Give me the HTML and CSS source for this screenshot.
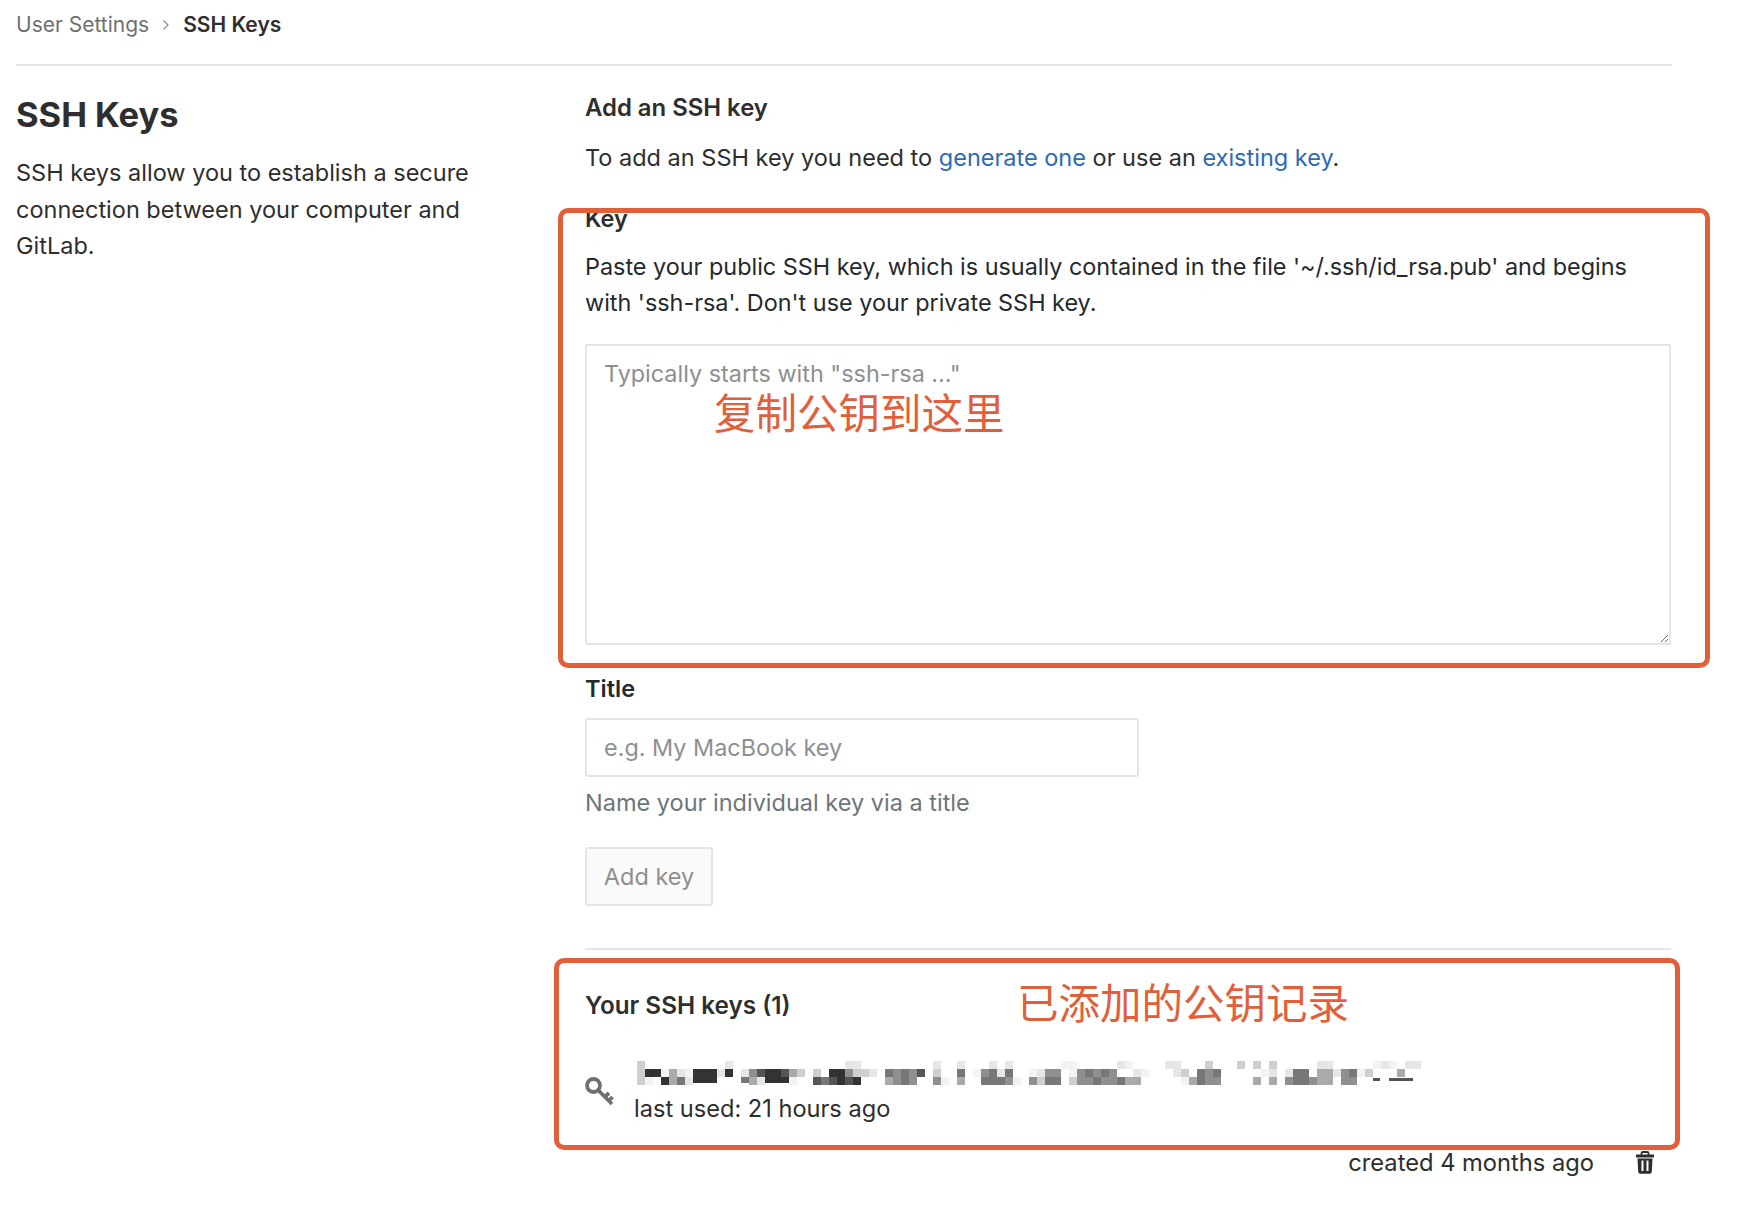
FILE: index.html
```html
<!DOCTYPE html>
<html lang="en">
<head>
<meta charset="utf-8">
<title>SSH Keys</title>
<link rel="stylesheet" href="styles.css">
</head>
<body>
<div class="page">
  <nav class="crumbs">
    <span class="crumb">User Settings</span>
    <svg class="chev" width="8" height="12" viewBox="0 0 8 12"><path d="M1.500 1.500 6 6l-4.500 4.500" fill="none" stroke="#8f8f8f" stroke-width="1.300"/></svg>
    <strong class="crumb-now">SSH Keys</strong>
  </nav>
  <main class="layout">
    <aside class="side">
      <h1 class="side-title">SSH Keys</h1>
      <p class="side-text">SSH keys allow you to establish a secure connection between your computer and GitLab.</p>
    </aside>
    <section class="content">
      <h2 class="head">Add an SSH key</h2>
      <p class="para intro">To add an SSH key you need to <a href="#" class="link">generate one</a> or use an <a href="#" class="link">existing key</a>.</p>
      <label class="label key-label">Key</label>
      <p class="para key-help">Paste your public SSH key, which is usually contained in the file '~/.ssh/id_rsa.pub' and begins with 'ssh-rsa'. Don't use your private SSH key.</p>
      <textarea class="area" placeholder="Typically starts with &quot;ssh-rsa ...&quot;"></textarea>
      <label class="label title-label">Title</label>
      <input class="input" type="text" placeholder="e.g. My MacBook key">
      <p class="hint">Name your individual key via a title</p>
      <button class="btn" type="button">Add key</button>
      <hr class="rule">
      <h2 class="head keys-head">Your SSH keys (1)</h2>
      <div class="key-row">
        <svg class="key-icon" width="32" height="32" viewBox="0 0 32 32"><circle cx="8.500" cy="8.500" r="6.500" fill="none" stroke="#707070" stroke-width="3.800"/><path d="M13 13 27 27M19 20.500l5-4.500M23 24.500l4.500-4.500" fill="none" stroke="#707070" stroke-width="3.800"/></svg>
        <div class="key-body">
          <svg class="mosaic" width="800" height="24" viewBox="0 0 800 24">
            <path fill="#333" d="M8 8h16v8H8zM56 8h24v8H56zM88 8h8v8h-8zM128 8h16v8h-16zM192 8h16v8h-16zM24 16h8v8h-8zM56 16h24v6H56zM128 16h24v6h-24zM200 16h8v8h-8zM216 16h8v8h-8z"/>
            <path fill="#555" d="M120 8h8v8h-8zM144 8h8v8h-8zM176 16h8v8h-8zM192 16h8v8h-8zM208 16h8v8h-8zM280 8h8v8h-8zM736 17h7v3h-7zM752 17h24v3h-24z"/>
            <path fill="#777" d="M40 16h8v8h-8zM104 16h8v6h-8zM184 16h8v8h-8zM248 8h8v8h-8zM264 8h8v8h-8zM320 8h8v8h-8zM352 8h8v8h-8zM368 8h8v8h-8zM264 16h8v8h-8zM344 16h8v8h-8zM352 16h16v8h-16zM408 16h16v8h-16zM448 8h8v8h-8zM464 8h8v8h-8zM456 16h8v8h-8zM480 16h8v8h-8zM560 8h8v8h-8zM576 8h8v8h-8zM560 16h8v8h-8zM576 16h8v8h-8zM656 8h16v8h-16zM656 16h16v8h-16zM712 8h8v8h-8z"/>
            <path fill="#8f8f8f" d="M112 8h8v8h-8zM208 8h8v8h-8zM256 8h8v8h-8zM272 8h8v8h-8zM256 16h8v8h-8zM272 16h8v8h-8zM296 16h8v8h-8zM344 8h8v8h-8zM368 16h16v8h-16zM408 8h8v8h-8zM416 8h8v8h-8zM392 16h8v8h-8zM440 8h8v8h-8zM456 8h8v8h-8zM472 8h8v8h-8zM440 16h8v8h-8zM448 16h8v8h-8zM464 16h16v8h-16zM568 8h8v8h-8zM568 16h8v8h-8zM576 16h8v8h-8zM648 16h8v8h-8zM672 16h8v8h-8zM704 8h8v8h-8zM704 16h8v8h-8zM712 16h8v8h-8z"/>
            <path fill="#aaa" d="M32 8h8v8h-8zM32 16h8v8h-8zM112 16h8v8h-8zM152 8h8v8h-8zM248 16h8v8h-8zM320 16h8v8h-8zM488 16h8v8h-8zM496 16h8v8h-8zM552 16h8v8h-8zM616 16h8v8h-8zM632 16h8v8h-8zM680 8h16v8h-16zM680 16h16v8h-16zM760 8h8v8h-8z"/>
            <path fill="#cfcfcf" d="M0 0h8v24H0zM160 8h8v8h-8zM176 8h8v8h-8zM216 8h16v8h-16zM296 8h8v8h-8zM432 16h8v8h-8zM400 16h8v8h-8zM544 8h8v8h-8zM568 0h8v8h-8zM600 0h8v8h-8zM616 0h8v8h-8zM632 0h8v8h-8zM728 8h8v8h-8z"/>
            <path fill="#e6e6e6" d="M88 0h8v8h-8zM40 8h8v8h-8zM48 16h8v8h-8zM80 8h8v8h-8zM104 8h8v8h-8zM120 16h8v8h-8zM232 8h8v8h-8zM208 0h8v8h-8zM216 0h8v8h-8zM296 0h8v8h-8zM320 0h8v8h-8zM352 0h8v8h-8zM368 0h8v8h-8zM360 8h8v8h-8zM400 8h8v8h-8zM480 0h8v8h-8zM496 8h8v8h-8zM528 0h8v8h-8zM536 0h8v8h-8zM536 8h8v8h-8zM648 8h8v8h-8zM632 8h8v8h-8zM680 0h16v8h-16zM696 8h8v8h-8zM744 0h8v8h-8zM768 0h8v8h-8zM776 0h8v8h-8z"/>
            <path fill="#f3f3f3" d="M8 16h8v8H8zM24 8h8v8h-8zM48 8h8v8h-8zM152 16h8v8h-8zM304 16h8v8h-8zM336 8h8v8h-8zM376 16h8v8h-8zM392 8h8v8h-8zM424 0h8v8h-8zM432 0h8v8h-8zM432 8h8v8h-8zM488 0h8v8h-8zM504 8h8v8h-8zM544 16h8v8h-8zM624 8h8v8h-8zM720 8h8v8h-8zM736 0h8v8h-8zM752 0h8v8h-8z"/>
          </svg>
          <div class="last-used">last used: 21 hours ago</div>
        </div>
      </div>
      <div class="key-meta">
        <span class="created">created 4 months ago</span>
        <svg class="trash" width="18" height="23" viewBox="0 0 18 23"><path fill="none" stroke="#2e2e2e" stroke-width="1.800" d="M5.500 4V2.500c0-.8.6-1.500 1.400-1.500h4.200c.8 0 1.400.7 1.400 1.500V4"/><path fill="#2e2e2e" d="M0 3.500h18V6.500H0zM1.500 7.500h15l-.7 13.300c-.1 1.200-.9 2-2 2H4.200c-1.100 0-1.900-.8-2-2z"/><path d="M6.500 9.500v10.500M11.500 9.500v10.500" stroke="#fff" stroke-width="2"/></svg>
      </div>
    </section>
  </main>
  <div class="mark mark-key"></div>
  <div class="mark mark-list"></div>
  <div class="note note-paste">复制公钥到这里</div>
  <div class="note note-added">已添加的公钥记录</div>
</div>
</body>
</html>
```

FILE: styles.css
```css
* { box-sizing: border-box; }
html, body { margin: 0; background: #fff; }
body { font-family: Inter, "Noto Sans CJK SC", sans-serif; color: #2e2e2e; font-size: 23.500px; }
.page { position: relative; width: 1750px; height: 1220px; overflow: hidden; padding: 0 78px 0 16px; }
.crumbs { height: 66px; border-bottom: 2px solid #e5e5e5; display: flex; align-items: center; gap: 13px; padding-bottom: 15px; font-size: 21px; }
.crumb { color: #707070; }
.crumb-now { font-weight: 600; color: #2e2e2e; }
.layout { display: flex; }
.side { width: 569px; flex: none; padding-top: 27px; }
.side-title { margin: 0 0 18px; font-size: 34.500px; line-height: 44px; font-weight: 700; }
.side-text { margin: 0; width: 480px; line-height: 36.500px; }
.content { flex: 1; min-width: 0; padding: 26px 1px 0 0; }
.head { margin: 0; font-size: 23.900px; line-height: 32px; font-weight: 600; }
.para { margin: 0; line-height: 36.500px; color: #2e2e2e; }
.intro { margin-top: 16px; }
.link { color: #2a6ab8; text-decoration: none; }
.label { display: block; font-weight: 600; line-height: 30px; color: #2e2e2e; }
.key-label { margin-top: 27px; }
.key-help { margin-top: 15px; font-size: 23.400px; color: #24292e; }
.area { display: block; width: 100%; height: 301px; margin-top: 22px; padding: 13px 17px; border: 2px solid #e5e5e5; border-radius: 2px; font: inherit; font-size: 23.400px; line-height: 30px; background: #fff; }
.area::placeholder, .input::placeholder { color: #8f8f8f; opacity: 1; }
.title-label { margin-top: 29px; color: #24292e; }
.input { display: block; width: 554px; height: 59px; margin-top: 14px; padding: 0 17px; border: 2px solid #e5e5e5; border-radius: 3px; font: inherit; font-size: 23.400px; background: #fff; }
.hint { margin: 8px 0 0; line-height: 36px; color: #6c757d; }
.btn { display: block; width: 128px; height: 59px; margin-top: 26px; padding: 0; border: 2px solid #e5e5e5; border-radius: 3px; background: #fafafa; color: #8f8f8f; font: inherit; }
.rule { height: 2px; margin: 42px 0 0; border: 0; background: #e5e5e5; }
.keys-head { margin-top: 39px; font-size: 24.300px; }
.key-row { display: flex; align-items: center; margin-top: 40px; gap: 17px; }
.key-icon { flex: none; margin-bottom: 1px; }
.key-body { min-width: 0; }
.mosaic { display: block; margin-left: 3px; filter: blur(0.500px); }
.last-used { font-size: 23.600px; line-height: 36px; margin-top: 6px; }
.key-meta { display: flex; justify-content: flex-end; align-items: center; gap: 42px; padding-right: 17px; margin-top: 20px; }
.created { font-size: 23.700px; line-height: 32px; }
.trash { flex: none; }
.mark { position: absolute; border: 5px solid #e15f3b; border-radius: 10px; pointer-events: none; }
.mark-key { left: 558px; top: 208px; width: 1152px; height: 460px; }
.mark-list { left: 554px; top: 958px; width: 1126px; height: 192px; }
.note { position: absolute; color: #e15f3b; font-family: "Noto Sans CJK SC", sans-serif; font-size: 41.500px; line-height: 56px; }
.note-paste { left: 714px; top: 383px; }
.note-added { left: 1017px; top: 973px; }
```
